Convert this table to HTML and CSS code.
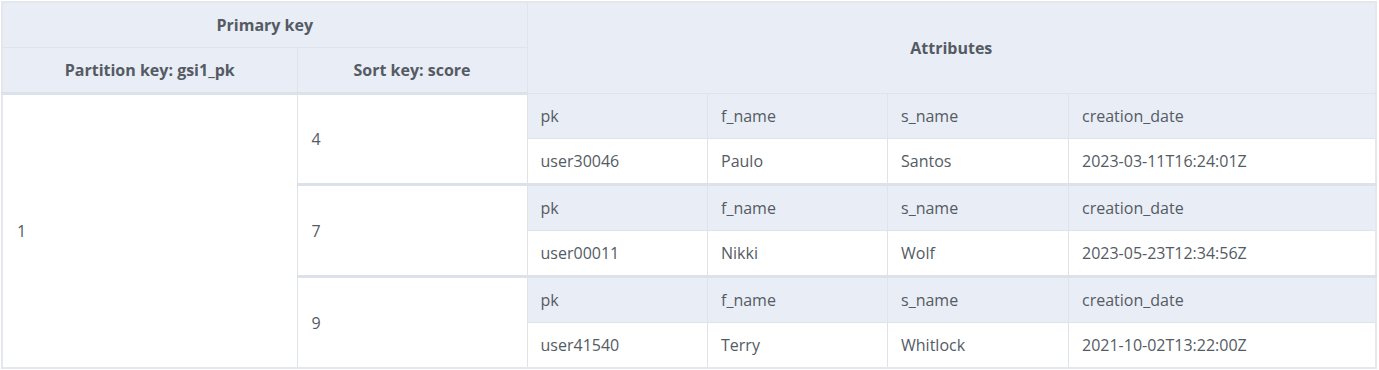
FILE: index.html
```html
<!DOCTYPE html>
<html>
<head>
<meta charset="utf-8">
<link rel="stylesheet" href="styles.css">
</head>
<body>
<table class="keys">
  <colgroup>
    <col class="c-part">
    <col class="c-sort">
    <col class="c-attr">
  </colgroup>
  <thead>
    <tr>
      <th colspan="2" class="hd">Primary key</th>
      <th rowspan="2" class="hd">Attributes</th>
    </tr>
    <tr>
      <th class="hd">Partition key: gsi1_pk</th>
      <th class="hd">Sort key: score</th>
    </tr>
  </thead>
  <tbody>
    <tr class="grp">
      <td rowspan="3" class="val">1</td>
      <td class="val">4</td>
      <td class="nest-cell">
        <table class="attrs">
          <colgroup><col class="a1"><col class="a2"><col class="a3"><col class="a4"></colgroup>
          <tr class="ahead"><td>pk</td><td>f_name</td><td>s_name</td><td>creation_date</td></tr>
          <tr class="adata"><td>user30046</td><td>Paulo</td><td>Santos</td><td>2023-03-11T16:24:01Z</td></tr>
        </table>
      </td>
    </tr>
    <tr class="grp">
      <td class="val">7</td>
      <td class="nest-cell">
        <table class="attrs">
          <colgroup><col class="a1"><col class="a2"><col class="a3"><col class="a4"></colgroup>
          <tr class="ahead"><td>pk</td><td>f_name</td><td>s_name</td><td>creation_date</td></tr>
          <tr class="adata"><td>user00011</td><td>Nikki</td><td>Wolf</td><td>2023-05-23T12:34:56Z</td></tr>
        </table>
      </td>
    </tr>
    <tr class="grp">
      <td class="val">9</td>
      <td class="nest-cell">
        <table class="attrs">
          <colgroup><col class="a1"><col class="a2"><col class="a3"><col class="a4"></colgroup>
          <tr class="ahead"><td>pk</td><td>f_name</td><td>s_name</td><td>creation_date</td></tr>
          <tr class="adata"><td>user41540</td><td>Terry</td><td>Whitlock</td><td>2021-10-02T13:22:00Z</td></tr>
        </table>
      </td>
    </tr>
  </tbody>
</table>
</body>
</html>
```

FILE: styles.css
```css
html, body {
  margin: 0;
  padding: 0;
  background: #ffffff;
}

body {
  padding: 1px 0 0 1px;
  font-family: "Open Sans", "Noto Sans", sans-serif;
  font-size: 16px;
  color: #545b64;
}

.keys {
  width: 1376px;
  border-collapse: collapse;
  table-layout: fixed;
  border: 2px solid #e4e7ee;
}

.c-part { width: 295px; }
.c-sort { width: 230px; }
.c-attr { width: auto; }

.keys th, .keys td {
  border: 1px solid #dfe3ea;
  padding: 0;
}

.hd {
  background: #e9edf5;
  font-weight: 700;
  text-align: center;
  height: 44px;
  line-height: 20px;
  font-size: 16px;
}

.keys thead tr:last-child th {
  border-bottom: 3px solid #dde1e9;
}

.keys tbody tr.grp > td {
  border-top: 3px solid #dde1e9;
}

.keys tbody tr.grp:first-child > td {
  border-top: none;
}

.val {
  padding: 0 14px !important;
  vertical-align: middle;
  background: #ffffff;
  line-height: 20px;
}

.nest-cell {
  padding: 0;
  vertical-align: top;
}

.attrs {
  width: 100%;
  border-collapse: collapse;
  table-layout: fixed;
}

.a1 { width: 180px; }
.a2 { width: 180px; }
.a3 { width: 181px; }
.a4 { width: auto; }

.attrs td {
  border: 1px solid #dfe3ea;
  padding: 0 13px;
  height: 44px;
  line-height: 20px;
  vertical-align: middle;
}

.attrs tr:first-child td { border-top: none; }
.attrs tr:last-child td { border-bottom: none; }
.attrs td:first-child { border-left: none; }
.attrs td:last-child { border-right: none; }

.ahead td { background: #e9edf5; }
.adata td { background: #ffffff; }
```
